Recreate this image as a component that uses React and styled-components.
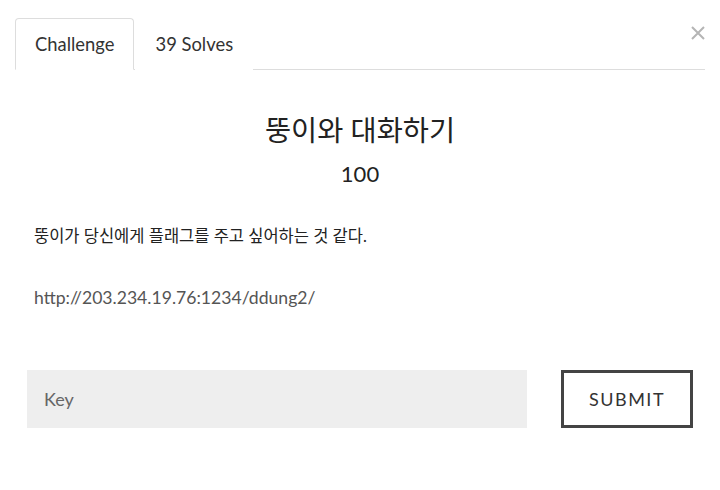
import React, { useState } from 'react';
import styled, { createGlobalStyle } from 'styled-components';

const GlobalStyle = createGlobalStyle`
    body {
        margin: 0;
        background: #fff;
        font-family: Lato, "Noto Sans CJK KR", sans-serif;
        color: #222;
    }
`;

const Modal = styled.div`
    position: relative;
    width: 720px;
    height: 490px;
    padding: 18px 15px 0;
    box-sizing: border-box;
`;

const CloseButton = styled.button`
    position: absolute;
    top: 25px;
    right: 14px;
    width: 16px;
    height: 16px;
    padding: 0;
    border: none;
    background: none;
    cursor: pointer;
`;

const Tabs = styled.div`
    display: flex;
    border-bottom: 1px solid #ddd;
`;

const Tab = styled.div`
    height: 52px;
    padding: 0 19px;
    margin-right: 1px;
    box-sizing: border-box;
    display: flex;
    align-items: center;
    font-size: 18.4px;
    color: #333;
    margin-bottom: -1px;
    border: 1px solid ${p => (p.active ? '#ddd' : 'transparent')};
    border-bottom-color: ${p => (p.active ? '#fff' : 'transparent')};
    border-radius: 4px 4px 0 0;
    background: #fff;
    cursor: pointer;
`;

const Body = styled.div`
    padding: 0 19px;
`;

const Title = styled.h2`
    margin: 42px 0 0;
    text-align: center;
    font-size: 28.4px;
    font-weight: 400;
    line-height: 36px;
    color: #222;
`;

const Points = styled.div`
    text-align: center;
    font-size: 22px;
    line-height: 30px;
    margin-top: 11px;
    color: #222;
`;

const Description = styled.p`
    margin: 36px 0 0;
    font-size: 16.5px;
    line-height: 22px;
    color: #222;
`;

const Link = styled.a`
    display: block;
    margin-top: 40px;
    font-size: 17.6px;
    line-height: 22px;
    color: #555;
    text-decoration: none;
`;

const Form = styled.form`
    display: flex;
    justify-content: space-between;
    align-items: center;
    margin: 61px 12px 0;
`;

const KeyInput = styled.input`
    width: 500px;
    height: 58px;
    box-sizing: border-box;
    border: none;
    outline: none;
    background: #eee;
    padding: 0 17px;
    font-family: Lato, sans-serif;
    font-size: 18px;
    color: #333;
    &::placeholder {
        color: #666;
    }
`;

const SubmitButton = styled.button`
    width: 132px;
    height: 58px;
    box-sizing: border-box;
    border: 3px solid #444;
    background: #fff;
    font-family: Lato, sans-serif;
    font-size: 18px;
    letter-spacing: 1.5px;
    color: #333;
    cursor: pointer;
`;

export default function App() {
    const [ tab, setTab ] = useState('challenge');
    const [ key, setKey ] = useState('');

    return (
        <Modal>
            <GlobalStyle />
            <Tabs>
                <Tab active={tab === 'challenge'} onClick={() => setTab('challenge')}>Challenge</Tab>
                <Tab active={tab === 'solves'} onClick={() => setTab('solves')}>39 Solves</Tab>
            </Tabs>
            <CloseButton aria-label="Close">
                <svg width="16" height="16" viewBox="0 0 16 16">
                    <path d="M2 2 L14 14 M14 2 L2 14" stroke="#b5b5b5" strokeWidth="2" />
                </svg>
            </CloseButton>
            <Body>
                <Title>뚱이와 대화하기</Title>
                <Points>100</Points>
                <Description>뚱이가 당신에게 플래그를 주고 싶어하는 것 같다.</Description>
                <Link href="#">http://203.234.19.76:1234/ddung2/</Link>
            </Body>
            <Form onSubmit={e => e.preventDefault()}>
                <KeyInput placeholder="Key" value={key} onChange={e => setKey(e.target.value)} />
                <SubmitButton type="submit">SUBMIT</SubmitButton>
            </Form>
        </Modal>
    );
}
